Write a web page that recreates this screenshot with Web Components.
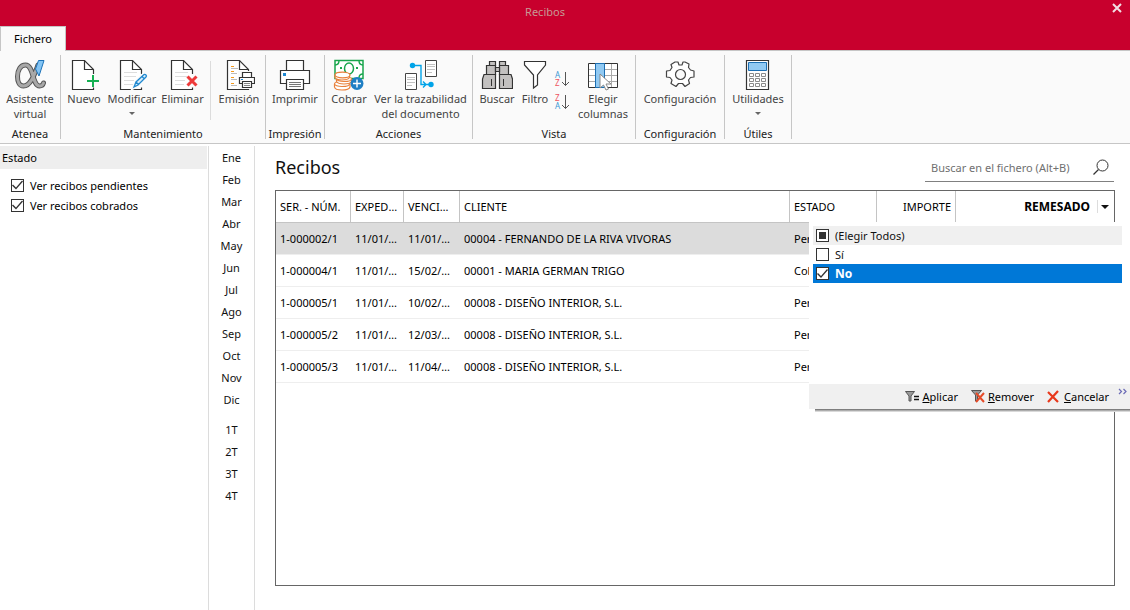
<!DOCTYPE html>
<html lang="es">
<head>
<meta charset="utf-8">
<title>Recibos</title>
<style>
  body { margin: 0; font: 11px/15px "Noto Sans", "Open Sans", sans-serif; color: #111; background: #fff; overflow: hidden; }
</style>
</head>
<body>
<app-window></app-window>

<script>
const define = (name, html, setup) => {
  const template = document.createElement('template');
  template.innerHTML = '<style>*{box-sizing:border-box}button{font:inherit;color:inherit;background:none;border:0;padding:0;margin:0}</style>' + html;
  customElements.define(name, class extends HTMLElement {
    constructor() {
      super();
      this.attachShadow({ mode: 'open' }).append(template.content.cloneNode(true));
    }
    connectedCallback() {
      if (setup && !this.ready) { this.ready = true; setup(this, this.shadowRoot); }
    }
  });
};

/* Ribbon icons, all on a 32 x 32 box */
const sheet = '<path d="M25.5 15V10.5L16.5 1.5H4.5V30.5H25.5V28.5" fill="#fff" stroke="#333" stroke-width="1.2"/><path d="M16.5 1.5V10.5H25.5" fill="none" stroke="#333" stroke-width="1.2"/>';
const lines = '<path d="M8 13.5H21M8 17.5H20M8 21.5H18M8 25.5H17" stroke="#ddd"/>';
const icons = {
  alpha: '<g fill="none" stroke-linecap="round" stroke-linejoin="round"><path d="M24 6C21 14 17 27 9.500 27C5 27 3.500 22 3.500 17.500C3.500 11 6.500 6 11.500 6C20 6 18 27 25.500 27C28 27 29 26 29.500 24" stroke="#555" stroke-width="5"/><path d="M24 6C21 14 17 27 9.500 27C5 27 3.500 22 3.500 17.500C3.500 11 6.500 6 11.500 6C20 6 18 27 25.500 27C28 27 29 26 29.500 24" stroke="#a8a8a8" stroke-width="3"/></g><path d="M24.500 1.500H30L25 17L21.500 10Z" fill="#83c4f4" stroke="#1c72b8"/>',
  nuevo: sheet + '<path d="M25 16V28M19 22H31" stroke="#16b053" stroke-width="2"/>',
  modificar: sheet + lines + '<path d="M18 28L20 23L28 15.500Q29 15 30 16Q31 17 30 18L22 26Z" fill="#fff" stroke="#fafafa" stroke-width="4"/><path d="M18 28L20 23L28 15.500Q29 15 30 16Q31 17 30 18L22 26ZM20 23L22.500 25.500M26 17.500L28.500 20" fill="#d8ecfa" stroke="#2088cf" stroke-width="1.300"/>',
  eliminar: sheet + lines + '<path d="M20.500 17.500L29.500 26.500M29.500 17.500L20.500 26.500" stroke="#fafafa" stroke-width="5"/><path d="M20.500 17.500L29.500 26.500M29.500 17.500L20.500 26.500" stroke="#ee3a3a" stroke-width="3"/>',
  emision: sheet + '<path d="M8 7.500H11M8 12.500H11M8 18.500H11M8 24.500H11" stroke="#f59a1c"/><path d="M8 9.500H15M8 14.500H14M8 20.500H14M8 26.500H14" stroke="#bbb"/><path d="M15 12H32V30H15Z" fill="#fafafa"/><g fill="#fff" stroke="#333" stroke-width="1.200"><path d="M19.500 18.500V13.500H28.500V18.500M19.500 24.500H16.500V18.500H31.500V24.500H28.500M19.500 22.500H28.500V28.500H19.500Z"/></g><path d="M21 24.500H27M21 26.500H27" stroke="#888"/><path d="M18 20.500H20" stroke="#1c86d1"/>',
  imprimir: '<g fill="#fff" stroke="#333" stroke-width="1.200"><path d="M7.500 12V1.500H24.500V12"/><path d="M7 24.500H1.500V11.500H30.500V24.500H25"/><path d="M7.500 20.500H24.500V30.500H7.500Z"/></g><path d="M10 23.500H22M10 25.500H22M10 27.500H22" stroke="#777"/><path d="M4 14H7V17H4Z" fill="#1c86d1"/>',
  cobrar: '<rect x="2" y="1.500" width="28" height="18" fill="#fff" stroke="#18a54c" stroke-width="1.500"/><path d="M2 6Q6 6 6 1.500M30 6Q26 6 26 1.500M30 15Q26 15 26 19" fill="none" stroke="#18a54c" stroke-width="1.400"/><ellipse cx="16" cy="9.500" rx="4.500" ry="5.500" fill="#fff" stroke="#18a54c" stroke-width="1.500"/><path d="M7 9H9M23 9H25" stroke="#18a54c" stroke-width="2"/><g fill="#fff" stroke="#e8803c" stroke-width="1.200"><path d="M1.500 25V28Q2 31 9 31Q16 31 17 28V25"/><ellipse cx="9" cy="25" rx="7.500" ry="2.500"/><path d="M3.500 20V22.500Q5 25 11 25Q17 25 18.500 22.500V20"/><ellipse cx="11" cy="20" rx="7.500" ry="2.500"/><path d="M2 16V18.500Q3 21 9 21Q15 21 16.500 18.500V16"/><ellipse cx="9.500" cy="16" rx="7.500" ry="2.800"/></g><circle cx="24" cy="24.500" r="6.500" fill="#1f7fc4"/><path d="M24 20.500V28.500M20 24.500H28" stroke="#fff" stroke-width="1.400"/>',
  traza: '<g fill="#fff" stroke="#444"><path d="M20.500 1.500H31.500V17.500H20.500ZM.500 14.500H11.500V30.500H.500Z"/></g><path d="M22 5.500H30M22 7.500H30M22 10.500H30M22 13.500H27M2 18.500H10M2 20.500H10M2 23.500H10M2 26.500H7" stroke="#c2c2c2"/><path d="M8 6.500H16V25.500H24M18 22.500L21 25.500L18 28.500" fill="none" stroke="#00a3e8" stroke-width="1.400"/><circle cx="7.500" cy="6.500" r="2.700" fill="#00a3e8"/><circle cx="26" cy="25.500" r="2.700" fill="#00a3e8"/>',
  buscar: '<g fill="#c3c1c0" stroke="#333" stroke-width="1.200"><path d="M5.500 6.500H14.500V15.500H5.500ZM18.500 6.500H27.500V15.500H18.500Z"/><path d="M8.500 2.500H14.500V6.500H8.500ZM18.500 2.500H24.500V6.500H18.500ZM14.500 8.500H18.500V12.500H14.500Z"/><path d="M3 15.500H14.500V29.500H1.500V20ZM18.500 15.500H30L31.500 20V29.500H18.500Z"/></g><path d="M10.500 20V27M22.500 20V27" stroke="#333"/>',
  filtro: '<path d="M5.500 2.500H26.500V6L18.500 16V26L14.500 29V16L5.500 6Z" fill="#fff" stroke="#333" stroke-width="1.200"/>',
  columnas: '<path d="M1.500 4.500H30.500V28.500H1.500Z" fill="#fff" stroke="#333"/><path d="M2 10.500H30M2 16.500H30M2 22.500H30M24.500 5V28" stroke="#aaa"/><path d="M8.500 4.500H17.500V28.500H8.500Z" fill="#91c9f2" stroke="#1c6fb3"/><path d="M13 15V29L16.500 26L19 31L21.500 30L19 25H24Z" fill="#fff" stroke="#888"/>',
  gear: '<path d="M13 3H14L15 6H18L19 3H21L25 5L24.500 8.500L26.500 11L30 12V18L26.500 18.500L24.500 21L25.500 24.500L21 27.500L18.500 24.500H14.500L12 27.500L7 24.500L8 21L6 18.500L2.500 18V12L6 11.500L8 8.500L7 5.500L11 3Z" fill="#fff" stroke="#444" stroke-width="1.200" stroke-linejoin="round"/><circle cx="16.500" cy="15.500" r="5" fill="#fafafa" stroke="#444" stroke-width="1.200"/>',
  calc: '<path d="M4.500 1.500H26.500V30.500H4.500Z" fill="#fff" stroke="#333" stroke-width="1.200"/><path d="M6.500 3.500H24.500V11.500H6.500Z" fill="#91c9f2" stroke="#1c6fb3"/><path d="M7.500 14.500H11.500V17.500H7.500ZM13.500 14.500H17.500V17.500H13.500ZM19.500 14.500H23.500V17.500H19.500ZM7.500 19.500H11.500V22.500H7.500ZM13.500 19.500H17.500V22.500H13.500ZM19.500 19.500H23.500V22.500H19.500ZM7.500 24.500H11.500V27.500H7.500ZM13.500 24.500H17.500V27.500H13.500ZM19.500 24.500H23.500V27.500H19.500Z" fill="#fff" stroke="#8a8a8a"/>'
};

define('ribbon-button', `
<style>
  :host { display: block; flex: none; color: #444; }
  button { width: 100%; display: flex; flex-direction: column; align-items: center; text-align: center; white-space: nowrap; }
  svg { width: 32px; height: 32px; }
  i { display: none; border: 3px solid transparent; border-top-color: #666; margin-top: 6px; }
  :host([menu]) i { display: block; }
</style>
<button type="button"><svg viewBox="0 0 32 32" aria-hidden="true"></svg><span><slot></slot></span><i></i></button>`,
(host, root) => { root.querySelector('svg').innerHTML = icons[host.getAttribute('icon')]; });

define('sort-buttons', `
<style>
  :host { display: flex; flex-direction: column; gap: 7px; padding-top: 12px; width: 26px; align-items: center; }
  button, svg { display: block; width: 16px; height: 16px; }
  text { font: 8px "Noto Sans", sans-serif; }
</style>
<button type="button" aria-label="Orden ascendente"><svg viewBox="0 0 16 16"><text x="1" y="7" fill="#3b98d4">A</text><text x="1" y="15" fill="#ee5561">Z</text><path d="M11.500 1V14.500M8 11L11.500 14.500L15 11" fill="none" stroke="#555"/></svg></button>
<button type="button" aria-label="Orden descendente"><svg viewBox="0 0 16 16"><text x="1" y="7" fill="#ee5561">Z</text><text x="1" y="15" fill="#3b98d4">A</text><path d="M11.500 1V14.500M8 11L11.500 14.500L15 11" fill="none" stroke="#555"/></svg></button>`);

define('ribbon-group', `
<style>
  :host { display: flex; flex-direction: column; flex: none; border-right: 1px solid #c6c6c6; height: 84px; }
  .tools { display: flex; flex: 1; padding-top: 4px; }
  .name { text-align: center; white-space: nowrap; color: #222; line-height: 10px; }
</style>
<div class="tools"><slot></slot></div><div class="name"></div>`,
(host, root) => { root.querySelector('.name').textContent = host.getAttribute('name'); });

define('ribbon-bar', `
<style>
  :host { display: flex; height: 94px; padding-top: 4px; background: #fafafa; border-top: 1px solid #c6c6c6; border-bottom: 1px solid #c6c6c6; box-sizing: border-box; }
  .w46 { width: 46px; } .w48 { width: 48px; } .w50 { width: 50px; } .w51 { width: 51px; } .w52 { width: 52px; }
  .w28 { width: 28px; } .w58 { width: 58px; } .w60 { width: 60px; } .w66 { width: 66px; } .w88 { width: 88px; } .w99 { width: 99px; }
  .rule { width: 1px; margin: 2px 2px 0; height: 59px; background: #dcdcdc; }
  .pad { padding-right: 4px; }
</style>
<ribbon-group name="Atenea"><ribbon-button class="w60" icon="alpha">Asistente<br>virtual</ribbon-button></ribbon-group>
<ribbon-group name="Mantenimiento">
  <ribbon-button class="w46" icon="nuevo">Nuevo</ribbon-button><ribbon-button class="w50" icon="modificar" menu>Modificar</ribbon-button><ribbon-button class="w51" icon="eliminar">Eliminar</ribbon-button><div class="rule"></div><ribbon-button class="w52" icon="emision">Emisión</ribbon-button>
</ribbon-group>
<ribbon-group name="Impresión"><ribbon-button class="w58" icon="imprimir">Imprimir</ribbon-button></ribbon-group>
<ribbon-group name="Acciones"><ribbon-button class="w48" icon="cobrar">Cobrar</ribbon-button><ribbon-button class="w99 pad" icon="traza">Ver la trazabilidad<br>del documento</ribbon-button></ribbon-group>
<ribbon-group name="Vista">
  <ribbon-button class="w48" icon="buscar">Buscar</ribbon-button><ribbon-button class="w28" icon="filtro">Filtro</ribbon-button><sort-buttons></sort-buttons><ribbon-button class="w60 pad" icon="columnas">Elegir<br>columnas</ribbon-button>
</ribbon-group>
<ribbon-group name="Configuración"><ribbon-button class="w88" icon="gear">Configuración</ribbon-button></ribbon-group>
<ribbon-group name="Útiles"><ribbon-button class="w66" icon="calc" menu>Utilidades</ribbon-button></ribbon-group>`);

define('title-bar', `
<style>
  :host { display: grid; grid-template-rows: 26px 24px; background: #c8002d; }
  header { display: grid; grid-template-columns: 1fr 40px; }
  h1 { margin: 0; padding-top: 4px; font-size: 11px; font-weight: 400; text-align: center; color: #c79a94; }
  .close { justify-self: end; align-self: start; padding: 3px 8px; }
  svg { display: block; width: 10px; height: 10px; }
  nav { display: flex; }
  .tab { width: 66px; background: #fafafa; border: 1px solid #c6c6c6; border-bottom: 0; margin-bottom: -1px; padding-bottom: 1px; position: relative; color: #000; }
</style>
<header><h1>Recibos</h1><button class="close" type="button" aria-label="Cerrar"><svg viewBox="0 0 10 10"><path d="M1 1L9 9M9 1L1 9" stroke="#f2dfe3" stroke-width="2"/></svg></button></header>
<nav><button class="tab" type="button">Fichero</button></nav>`);

define('check-option', `
<style>
  :host { display: block; }
  label { display: flex; align-items: center; gap: 6px; height: 100%; }
  input { appearance: none; flex: none; width: 13px; height: 13px; margin: 0; border: 1px solid #333; background: #fff; display: grid; place-items: center; }
  input:checked::before { content: ""; width: 11px; height: 11px; background: #333; clip-path: polygon(0 6px, 1px 5px, 4px 8px, 10px 1px, 11px 2px, 4px 10px); }
  input:indeterminate::before { content: ""; width: 7px; height: 7px; background: #333; }
</style>
<label><input type="checkbox"><span><slot></slot></span></label>`,
(host, root) => {
  const box = root.querySelector('input');
  box.checked = host.hasAttribute('checked');
  box.indeterminate = host.hasAttribute('mixed');
});

define('status-panel', `
<style>
  :host { display: block; width: 209px; flex: none; border-right: 1px solid #dcdcdc; margin-top: 2px; box-sizing: border-box; }
  h2 { margin: 0 1px 6px 0; padding: 4px 2px; font-size: 11px; font-weight: 400; background: #eee; color: #000; }
  check-option { height: 20px; margin-left: 11px; color: #000; }
</style>
<h2>Estado</h2>
<check-option checked>Ver recibos pendientes</check-option>
<check-option checked>Ver recibos cobrados</check-option>`);

define('period-rail', `
<style>
  :host { display: flex; flex-direction: column; width: 46px; flex: none; border-right: 1px solid #dcdcdc; margin-top: 2px; box-sizing: border-box; }
  div { display: flex; flex-direction: column; margin-bottom: 8px; }
  button { height: 22px; }
</style>
<div class="months"></div><div class="quarters"></div>`,
(host, root) => {
  const fill = (sel, names) => root.querySelector(sel).innerHTML = names.split(' ').map(n => `<button type="button">${n}</button>`).join('');
  fill('.months', 'Ene Feb Mar Abr May Jun Jul Ago Sep Oct Nov Dic');
  fill('.quarters', '1T 2T 3T 4T');
});

define('search-field', `
<style>
  :host { display: flex; width: 189px; height: 29px; border-bottom: 1px solid #808080; box-sizing: border-box; align-items: center; }
  input { flex: 1; min-width: 0; border: 0; outline: 0; padding: 0 6px; font: inherit; background: none; }
  input::placeholder { color: #707070; opacity: 1; }
  button { margin-right: 5px; }
  svg { display: block; width: 16px; height: 16px; }
</style>
<input type="search" placeholder="Buscar en el fichero (Alt+B)" aria-label="Buscar en el fichero">
<button type="button" aria-label="Buscar"><svg viewBox="0 0 16 16"><circle cx="9.500" cy="6.500" r="5.500" fill="none" stroke="#333"/><path d="M5.500 10.500L.500 15.500" stroke="#333" stroke-width="1.200"/></svg></button>`);

define('column-filter', `
<style>
  :host { display: flex; flex-direction: column; width: 321px; height: 187px; background: #fff; color: #111; }
  .list { flex: 1; padding: 4px 8px 0 4px; }
  check-option { height: 19px; padding-left: 3px; }
  .all { background: #f0f0f0; }
  .on { background: #0078d7; color: #fff; font-weight: 700; font-size: 12px; }
  footer { display: flex; height: 25px; background: #f0f0f0; justify-content: flex-end; align-items: center; position: relative; padding-bottom: 1px; }
  footer::after { content: ""; position: absolute; left: 6px; right: 0; top: 25px; height: 3px; background: linear-gradient(#666, #bbb 60%, #eee); }
  footer button { display: flex; align-items: center; gap: 3px; margin-left: 13px; color: #000; }
  footer svg { width: 14px; height: 14px; }
  footer .more { align-self: flex-start; margin: 4px 2px 0 9px; }
  .more svg { width: 10px; height: 7px; }
</style>
<div class="list"><check-option class="all" mixed>(Elegir Todos)</check-option><check-option>Sí</check-option><check-option class="on" checked>No</check-option></div>
<footer>
  <button type="button"><svg viewBox="0 0 14 14"><path d="M.500 2.500H9.500L6 7V12H4V7Z" fill="#999" stroke="#555"/><path d="M9 7.500H14M9 10.500H14" stroke="#111" stroke-width="1.500"/></svg><span><u>A</u>plicar</span></button>
  <button type="button"><svg viewBox="0 0 14 14"><path d="M.500 1.500H10.500L6.500 6V12H4.500V6Z" fill="#999" stroke="#555"/><path d="M5 4L13 13M13 4L5 13" stroke="#e64b28" stroke-width="2"/></svg><span><u>R</u>emover</span></button>
  <button type="button"><svg viewBox="0 0 14 14"><path d="M1 3L11 13M11 2L1 13" stroke="#e8381b" stroke-width="2.200"/></svg><span><u>C</u>ancelar</span></button>
  <button type="button" class="more" aria-label="Más"><svg viewBox="0 0 10 7"><path d="M1 1L3.500 3.500L1 6M5.500 1L8 3.500L5.500 6" fill="none" stroke="#6b6bb5" stroke-width="1.200"/></svg></button>
</footer>`);

define('receipts-grid', `
<style>
  :host { display: block; position: relative; flex: 1; border: 1px solid #666; color: #000; }
  table { width: 100%; table-layout: fixed; border-collapse: separate; border-spacing: 0; }
  th, td { height: 32px; padding: 0 4px; text-align: left; font-weight: 400; white-space: nowrap; overflow: hidden; text-overflow: ellipsis; border-bottom: 1px solid #eee; }
  th { border-right: 1px solid #c4c4c4; border-bottom-color: #c4c4c4; }
  .num { text-align: right; }
  .last { border-right: 0; font-weight: 700; }
  .last div { display: flex; justify-content: flex-end; align-items: center; font-size: 12px; }
  .last button { margin-left: 7px; border-left: 1px solid #ddd; padding: 5px 1px 4px 3px; }
  .last i { display: block; border: 4px solid transparent; border-top-color: #111; border-bottom: 0; }
  .sel td { background: #dcdcdc; }
  .c1 { width: 75px; } .c2 { width: 53px; } .c3 { width: 56px; } .c5 { width: 87px; } .c6 { width: 79px; } .c7 { width: 158px; }
  column-filter { position: absolute; top: 31px; right: -16px; }
</style>
<table>
  <colgroup><col class="c1"><col class="c2"><col class="c3"><col><col class="c5"><col class="c6"><col class="c7"></colgroup>
  <thead><tr><th>SER. - NÚM.</th><th>EXPEDICIÓN</th><th>VENCIMIENTO</th><th>CLIENTE</th><th>ESTADO</th><th class="num">IMPORTE</th><th class="last"><div>REMESADO<button type="button" aria-label="Filtrar"><i></i></button></div></th></tr></thead>
  <tbody></tbody>
</table>
<column-filter></column-filter>`,
(host, root) => {
  const rows = [
    ['1-000002/1', '11/01/2021', '11/01/2021', '00004 - FERNANDO DE LA RIVA VIVORAS', 'Pendiente'],
    ['1-000004/1', '11/01/2021', '15/02/2021', '00001 - MARIA GERMAN TRIGO', 'Cobrado'],
    ['1-000005/1', '11/01/2021', '10/02/2021', '00008 - DISEÑO INTERIOR, S.L.', 'Pendiente'],
    ['1-000005/2', '11/01/2021', '12/03/2021', '00008 - DISEÑO INTERIOR, S.L.', 'Pendiente'],
    ['1-000005/3', '11/01/2021', '11/04/2021', '00008 - DISEÑO INTERIOR, S.L.', 'Pendiente']
  ];
  root.querySelector('tbody').innerHTML = rows.map((r, i) => `<tr${i ? '' : ' class="sel"'}>${r.map(c => `<td>${c}</td>`).join('')}<td></td><td></td></tr>`).join('');
});

define('app-window', `
<style>
  :host { display: flex; flex-direction: column; min-height: 100vh; }
  .body { display: flex; flex: 1; }
  main { flex: 1; min-width: 0; display: flex; flex-direction: column; padding: 9px 15px 24px 20px; }
  .head { display: flex; justify-content: space-between; align-items: center; height: 29px; margin-bottom: 8px; padding-right: 1px; }
  h2 { margin: 0 0 2px; font-size: 18px; line-height: 24px; font-weight: 400; color: #111; }
</style>
<title-bar></title-bar>
<ribbon-bar></ribbon-bar>
<div class="body">
  <status-panel></status-panel>
  <period-rail></period-rail>
  <main>
    <div class="head"><h2>Recibos</h2><search-field></search-field></div>
    <receipts-grid></receipts-grid>
  </main>
</div>`);
</script>
</body>
</html>
